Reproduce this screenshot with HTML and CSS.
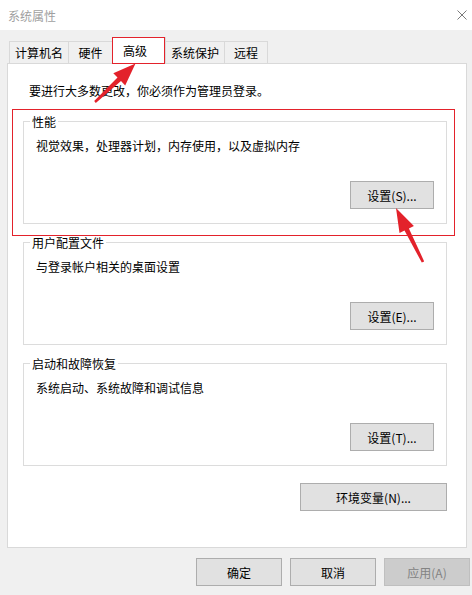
FILE: index.html
```html
<!DOCTYPE html>
<html>
<head>
    <meta charset="utf-8">
    <title>系统属性</title>
    <link rel="stylesheet" href="styles.css">
</head>
<body>
<div class="window">
    <div class="titlebar">
        <span class="title">系统属性</span>
        <svg class="close" width="10" height="10" viewBox="0 0 10 10">
            <path d="M0.5 0.5 L9.5 9.5 M9.5 0.5 L0.5 9.5" stroke="#7a7a7a" stroke-width="1" fill="none"/>
        </svg>
    </div>

    <div class="tabs">
        <div class="tab">计算机名</div>
        <div class="tab">硬件</div>
        <div class="tab active">高级</div>
        <div class="tab">系统保护</div>
        <div class="tab">远程</div>
    </div>

    <div class="panel">
        <p class="intro">要进行大多数更改，你必须作为管理员登录。</p>

        <fieldset class="group">
            <legend>性能</legend>
            <p class="desc">视觉效果，处理器计划，内存使用，以及虚拟内存</p>
            <div class="actions"><button class="btn">设置(S)...</button></div>
        </fieldset>

        <fieldset class="group">
            <legend>用户配置文件</legend>
            <p class="desc">与登录帐户相关的桌面设置</p>
            <div class="actions"><button class="btn">设置(E)...</button></div>
        </fieldset>

        <fieldset class="group">
            <legend>启动和故障恢复</legend>
            <p class="desc">系统启动、系统故障和调试信息</p>
            <div class="actions"><button class="btn">设置(T)...</button></div>
        </fieldset>

        <div class="env-row"><button class="btn btn-wide">环境变量(N)...</button></div>
    </div>

    <div class="footer">
        <button class="btn btn-foot">确定</button>
        <button class="btn btn-foot">取消</button>
        <button class="btn btn-foot" disabled>应用(A)</button>
    </div>

    <!-- red highlight marks drawn over the dialog -->
    <div class="mark mark-tab"></div>
    <div class="mark mark-perf"></div>
    <svg class="arrows" width="472" height="595" viewBox="0 0 472 595">
        <polygon points="95.8,102.9 121,81.1 125.2,85.5 135.5,63.5 113.3,73.2 117.5,77.6 94.2,101.1" fill="#e3222b"/>
        <polygon points="424.2,261.4 408.9,228.4 413.9,225.9 396,208 399.5,233.1 404.5,230.6 421.8,262.6" fill="#e3222b"/>
    </svg>
</div>
</body>
</html>
```

FILE: styles.css
```css
body {
    margin: 0;
    background-color: #f0f0f0;
    font-family: "Noto Sans CJK SC", "Liberation Sans", sans-serif;
    font-size: 12px;
    color: #000;
}

.window {
    position: relative;
    width: 472px;
    height: 595px;
    overflow: hidden;
}

.titlebar {
    height: 30px;
    background-color: #fff;
    display: flex;
    align-items: center;
    justify-content: space-between;
    padding: 0 5px 0 8px;
}

.title {
    color: #a0a0a0;
    line-height: 17px;
}

.close {
    margin-top: -1px;
}

.tabs {
    display: flex;
    align-items: flex-end;
    height: 26px;
    padding: 7px 0 0 9px;
}

.tab {
    box-sizing: border-box;
    height: 22px;
    min-width: 44px;
    padding: 0 5px;
    line-height: 21px;
    text-align: center;
    background-color: #f0f0f0;
    border: 1px solid #d9d9d9;
    border-right: 0;
    border-bottom: 0;
}

.tab:last-child {
    border-right: 1px solid #d9d9d9;
}

.tab.active {
    position: relative;
    z-index: 1;
    height: 27px;
    margin-bottom: -1px;
    margin-right: -1px;
    padding: 0 18px 0 10px;
    line-height: 25px;
    background-color: #fff;
    border-right: 1px solid #d9d9d9;
}

.panel {
    box-sizing: border-box;
    height: 485px;
    margin: 0 5px 0 7px;
    padding: 18px 19px 0 15px;
    background-color: #fff;
    border: 1px solid #d9d9d9;
}

.intro {
    margin: 0;
    padding-left: 6px;
    line-height: 17px;
}

.group {
    margin: 10px 0 0 0;
    padding: 7px 12px 14px 12px;
    min-width: 0;
    border: 1px solid #dcdcdc;
}

.intro + .group {
    margin-top: 14px;
}

.group legend {
    margin-left: -6px;
    padding: 0 2px;
    line-height: 17px;
}

.desc {
    margin: 0;
    line-height: 17px;
}

.actions {
    display: flex;
    justify-content: flex-end;
    margin-top: 27px;
}

.btn {
    box-sizing: border-box;
    width: 84px;
    height: 28px;
    padding: 0;
    font-family: inherit;
    font-size: 12px;
    color: #000;
    background-color: #e1e1e1;
    border: 1px solid #adadad;
}

.btn:disabled {
    color: #838383;
    background-color: #cccccc;
    border-color: #bfbfbf;
}

.env-row {
    display: flex;
    justify-content: flex-end;
    margin-top: 17px;
}

.btn-wide {
    width: 147px;
}

.footer {
    display: flex;
    justify-content: flex-end;
    gap: 8px;
    margin-top: 10px;
    padding-right: 2px;
}

.btn-foot {
    width: 86px;
}

.mark {
    position: absolute;
    border: 1px solid #e3222b;
    pointer-events: none;
}

.mark-tab {
    left: 112px;
    top: 37px;
    width: 51px;
    height: 25px;
    z-index: 2;
}

.mark-perf {
    left: 12px;
    top: 109px;
    width: 441px;
    height: 125px;
}

.arrows {
    position: absolute;
    left: 0;
    top: 0;
    pointer-events: none;
    z-index: 3;
}
```
